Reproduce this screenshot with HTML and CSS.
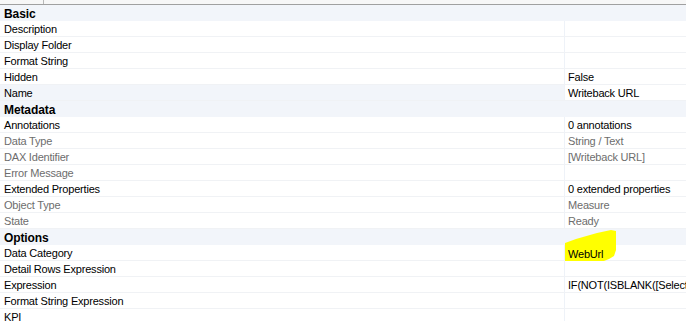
FILE: index.html
```html
<!DOCTYPE html>
<html>
<head>
<meta charset="utf-8">
<link rel="stylesheet" href="styles.css">
</head>
<body>
<div class="grid">
  <div class="topbar"><div class="tab"></div></div>
  <div class="cat">Basic</div>
  <div class="row"><div class="k">Description</div><div class="v"></div></div>
  <div class="row"><div class="k">Display Folder</div><div class="v"></div></div>
  <div class="row"><div class="k">Format String</div><div class="v"></div></div>
  <div class="row"><div class="k">Hidden</div><div class="v">False</div></div>
  <div class="row sel"><div class="k">Name</div><div class="v">Writeback URL</div></div>
  <div class="cat">Metadata</div>
  <div class="row"><div class="k">Annotations</div><div class="v">0 annotations</div></div>
  <div class="row ro"><div class="k">Data Type</div><div class="v">String / Text</div></div>
  <div class="row ro"><div class="k">DAX Identifier</div><div class="v">[Writeback URL]</div></div>
  <div class="row ro"><div class="k">Error Message</div><div class="v"></div></div>
  <div class="row"><div class="k">Extended Properties</div><div class="v">0 extended properties</div></div>
  <div class="row ro"><div class="k">Object Type</div><div class="v">Measure</div></div>
  <div class="row ro"><div class="k">State</div><div class="v">Ready</div></div>
  <div class="cat">Options</div>
  <div class="row"><div class="k">Data Category</div><div class="v hl-cell">WebUrl</div></div>
  <div class="row"><div class="k">Detail Rows Expression</div><div class="v"></div></div>
  <div class="row"><div class="k">Expression</div><div class="v">IF(NOT(ISBLANK([Select</div></div>
  <div class="row"><div class="k">Format String Expression</div><div class="v"></div></div>
  <div class="row last"><div class="k">KPI</div><div class="v"></div></div>
</div>
<svg class="marker" width="686" height="321" viewBox="0 0 686 321">
  <polygon points="565,243 576,239 597,233 611,230 616,231 616,250 614,256 609,259 604,261 565,261" fill="#ffff00"/>
</svg>
<div class="overlay-text">WebUrl</div>
</body>
</html>
```

FILE: styles.css
```css
html, body {
  margin: 0;
  padding: 0;
  background: #ffffff;
  overflow: hidden;
}
body {
  width: 686px;
  height: 321px;
  position: relative;
  font-family: "Liberation Sans", Arial, sans-serif;
  font-size: 11px;
  letter-spacing: -0.2px;
  color: #000000;
}
.grid {
  display: flex;
  flex-direction: column;
}
.topbar {
  height: 4px;
  background: #f7f7f7;
  border-bottom: 1px solid #a0a0a0;
  display: flex;
}
.tab {
  width: 43px;
  border-right: 1px solid #b8b8b8;
}
.cat {
  height: 16px;
  line-height: 16px;
  padding-top: 1px;
  background: #f2f5fa;
  font-weight: bold;
  padding-left: 4px;
  box-sizing: border-box;
  font-size: 12px;
  letter-spacing: -0.1px;
}
.row {
  display: grid;
  grid-template-columns: 564px 1fr;
  height: 16px;
  box-sizing: border-box;
  border-bottom: 1px solid #f0f2f5;
}
.row .k {
  padding-left: 4px;
  padding-top: 1px;
  line-height: 15px;
  white-space: nowrap;
  overflow: hidden;
}
.row .v {
  border-left: 1px solid #eef2f8;
  padding-left: 3px;
  padding-top: 1px;
  line-height: 15px;
  white-space: nowrap;
  overflow: hidden;
}
.row.ro {
  color: #6d6d6d;
}
.row.sel .k {
  background: #f2f5fa;
}
.hl-cell {
  color: transparent;
}
.marker {
  position: absolute;
  left: 0;
  top: 0;
  pointer-events: none;
}
.overlay-text {
  position: absolute;
  left: 568px;
  top: 247px;
  line-height: 15px;
  color: #000000;
}
```
